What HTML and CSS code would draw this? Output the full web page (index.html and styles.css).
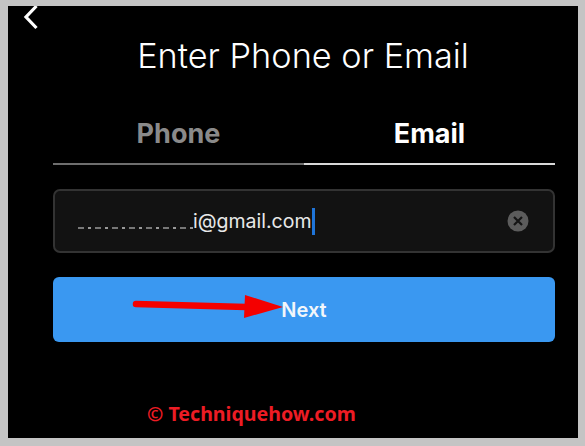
FILE: index.html
```html
<!DOCTYPE html>
<html lang="en">
<head>
    <meta charset="UTF-8">
    <title>Enter Phone or Email</title>
    <link rel="stylesheet" href="styles.css">
</head>
<body>
    <div class="screen">
        <svg class="back" width="20" height="24" viewBox="0 0 20 24">
            <path d="M15.500 0 L5 11 L15.500 22" fill="none" stroke="#fff" stroke-width="3.200"/>
        </svg>
        <h1 class="title">Enter Phone or Email</h1>

        <div class="tabs">
            <div class="tab">Phone</div>
            <div class="tab active">Email</div>
        </div>

        <div class="field">
            <span class="hidden-part"></span><span class="value">i@gmail.com</span><span class="caret"></span>
            <svg class="clear" width="22" height="22" viewBox="0 0 22 22">
                <circle cx="11" cy="11" r="10.500" fill="#5c5c5c"/>
                <path d="M7 7 L15 15 M15 7 L7 15" stroke="#151515" stroke-width="2.200"/>
            </svg>
        </div>

        <button class="next">Next</button>
        <svg class="arrow" width="152" height="26" viewBox="0 0 152 26">
            <path d="M4 10 L114 13" stroke="#f40000" stroke-width="6.500" stroke-linecap="round"/>
            <polygon points="113,1 151,13 112,24" fill="#f40000"/>
        </svg>

        <div class="credit">© Techniquehow.com</div>
    </div>
</body>
</html>
```

FILE: styles.css
```css
* {
    box-sizing: border-box;
}

body {
    margin: 0;
    background-color: #c4c4c4;
    font-family: 'Inter', sans-serif;
}

.screen {
    position: relative;
    margin: 6px 7px 8px 8px;
    height: 432px;
    padding: 0 23px 0 45px;
    background-color: #000;
    color: #fff;
}

.back {
    position: absolute;
    left: 13px;
    top: 0;
}

.title {
    margin: 0;
    padding: 28px 2px 0 0;
    font-size: 34.300px;
    line-height: 44px;
    font-weight: 300;
    text-align: center;
}

.tabs {
    display: grid;
    grid-template-columns: 1fr 1fr;
    margin-top: 38px;
}

.tab {
    height: 49px;
    border-bottom: 2px solid #6e6e6e;
    font-size: 27px;
    line-height: 36px;
    font-weight: 700;
    text-align: center;
    color: #8a8a8a;
}

.tab.active {
    border-bottom-color: #d8d8d8;
    color: #fff;
}

.field {
    display: flex;
    align-items: center;
    height: 64px;
    margin-top: 24px;
    padding: 0 24px 0 23px;
    background-color: #121212;
    border: 2px solid #333;
    border-radius: 7px;
    font-size: 19.500px;
}

.hidden-part {
    width: 115px;
    height: 2px;
    margin-top: 14px;
    background: repeating-linear-gradient(90deg, #777 0 6px, #121212 6px 10px, #999 10px 13px, #121212 13px 17px);
}

.value {
    color: #e8e8e8;
}

.caret {
    width: 3px;
    height: 27px;
    background-color: #1f74d8;
}

.clear {
    margin-left: auto;
}

.next {
    display: block;
    width: 100%;
    height: 65px;
    margin-top: 24px;
    border: none;
    border-radius: 6px;
    background-color: #3a98f1;
    color: #f2f6fa;
    font-family: 'Inter', sans-serif;
    font-size: 20px;
    font-weight: 600;
}

.arrow {
    position: absolute;
    left: 124px;
    top: 288px;
}

.credit {
    margin-top: 60px;
    padding-left: 94px;
    font-family: 'Noto Sans', sans-serif;
    font-size: 19.600px;
    line-height: 24px;
    font-weight: 700;
    color: #ed1c24;
}
```
